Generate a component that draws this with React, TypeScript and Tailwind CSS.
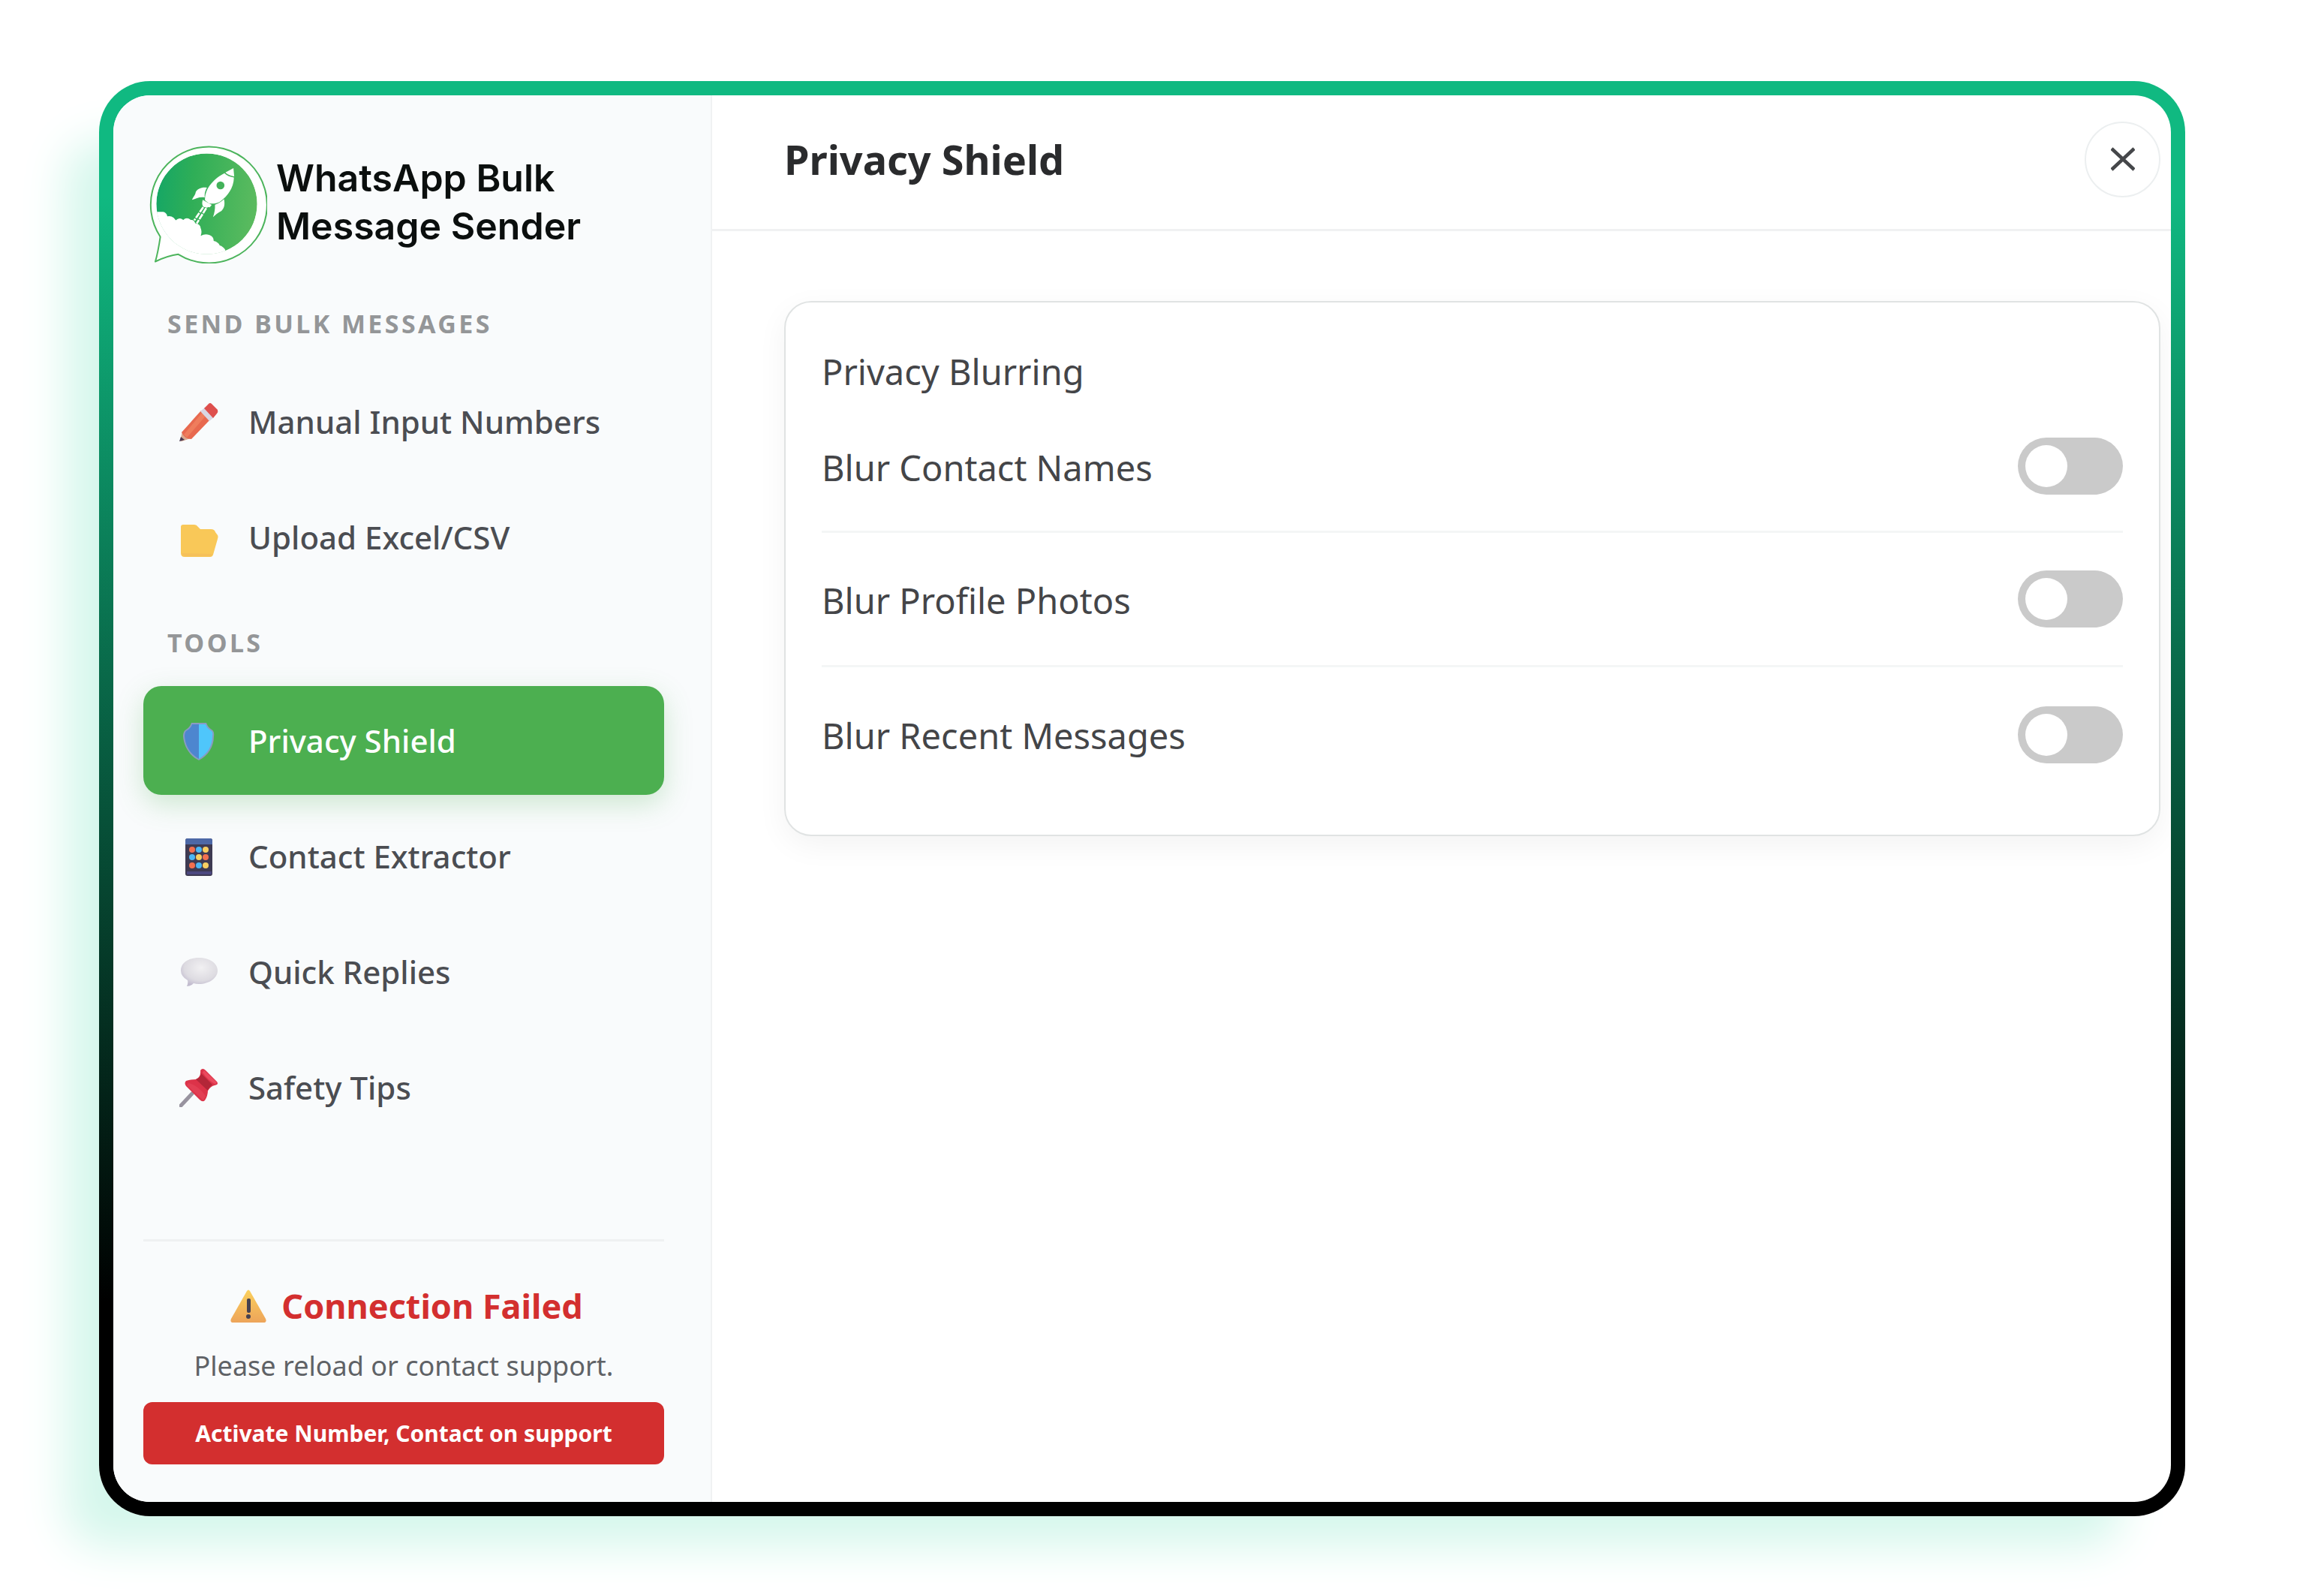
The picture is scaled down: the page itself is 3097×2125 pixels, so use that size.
import { useState } from "react";
import type { ReactNode } from "react";
import { clsx } from "clsx";

type NavItem = {
  id: string;
  label: string;
  icon: ReactNode;
};

type BlurSetting = {
  id: string;
  label: string;
};

function Logo() {
  return (
    <svg viewBox="54 64 484 480" className="h-40 w-[161px] shrink-0" aria-hidden="true">
      <defs>
        <linearGradient id="logo-green" x1="0" y1="0.4" x2="1" y2="0.5">
          <stop offset="0" stopColor="#16a765" />
          <stop offset="0.35" stopColor="#2fae57" />
          <stop offset="1" stopColor="#5cbb5f" />
        </linearGradient>
        <clipPath id="logo-disc">
          <circle cx="296" cy="306" r="202" />
        </clipPath>
      </defs>
      <path
        d="M110 438A233 233 0 1 1 182 508C150 512 118 524 90 537C99 506 105 472 110 438Z"
        fill="#fff"
        stroke="#4cb45c"
        strokeWidth="6"
        strokeLinejoin="round"
      />
      <g clipPath="url(#logo-disc)">
        <circle cx="296" cy="306" r="202" fill="url(#logo-green)" />
        <path
          d="M80 338H122Q136 342 138 356Q152 352 164 362L172 372Q186 358 202 370Q216 356 232 370Q246 368 250 384Q270 386 272 404Q278 416 272 434Q288 424 306 430Q324 436 324 454Q342 458 348 472Q362 476 370 490L380 540H60Z"
          fill="#fff"
        />
      </g>
      {/* rocket */}
      <g fill="#fff">
        <path d="M371 180L403 163L406 196C398 194 380 190 371 180Z" />
        <path d="M367 183C376 193 392 199 405 200C404 238 384 272 348 298C335 305 320 306 305 304L289 291C288 276 293 258 300 245C316 218 338 198 367 183Z" />
        <path d="M297 241C275 238 259 246 252 258C250 272 240 280 237 290C254 284 268 276 288 280C286 265 290 252 297 241Z" />
        <path d="M365 287C370 308 366 324 355 334C340 342 330 350 321 359C327 342 330 326 329 309C344 304 356 297 365 287Z" />
        <path d="M280 290L316 310L308 320C300 316 298 326 290 318C282 322 274 310 280 290Z" />
      </g>
      <circle cx="351" cy="232" r="16" fill="#43b25a" />
      <path d="M294 323L256 384M282 319L246 372" stroke="#fff" strokeWidth="8" strokeDasharray="24 4" />
    </svg>
  );
}

function PencilIcon() {
  return (
    <svg viewBox="0 0 52 52" className="size-13" aria-hidden="true">
      <path d="M1 51L4 39L15 48L3 52Z" fill="#d9a98f" />
      <path d="M0 52L2 46L7 50Z" fill="#4b3a52" />
      <path d="M3 40L29 11L43 21L16 49Q7 49 3 40Z" fill="#e8694f" />
      <path d="M6 43L31 13L36 17L10 47Z" fill="#ef7d5d" />
      <path d="M28 12L34 7L46 20L40 25Z" fill="#d9d6e2" />
      <path d="M33 8L39 2Q41 0 43 2L51 10Q52 13 50 15L45 21Z" fill="#de4f4d" />
    </svg>
  );
}

function FolderIcon() {
  return (
    <svg viewBox="0 0 52 52" className="size-13" aria-hidden="true">
      <path d="M2 12Q2 9 5 9H20Q23 9 25 12L28 15H42Q47 15 48 19L51 23Q52 25 51 28L45 49Q44 52 41 52H7Q2 52 2 47Z" fill="#f9c858" />
      <path d="M3 47Q4 51 9 51H41Q43 51 44 48Z" fill="#f5c05a" />
    </svg>
  );
}

function ShieldIcon() {
  return (
    <svg viewBox="0 0 52 52" className="size-13" aria-hidden="true">
      <path d="M16 2H36Q38 8 43 11Q47 13 46 20C46 34 38 46 26 52C14 46 6 34 5 20Q5 13 9 11Q14 8 16 2Z" fill="#8a9bc0" />
      <path d="M17 4H26V50C15 44 8 33 7 20Q7 15 9 13Q15 10 17 4Z" fill="#4d86cf" />
      <path d="M26 4H35Q37 10 43 13Q45 15 44 20C44 33 37 44 26 50Z" fill="#4fc6fb" />
    </svg>
  );
}

function PhoneIcon() {
  return (
    <svg viewBox="0 0 52 52" className="size-13" aria-hidden="true">
      <rect x="8" y="2" width="36" height="50" rx="3" fill="#3e3a52" />
      <path d="M8 5Q8 2 11 2H41Q44 2 44 5V10H8Z" fill="#4d68a6" />
      <rect x="10" y="46" width="33" height="4" fill="#4c4880" />
      <g fill="#f2704f">
        <circle cx="17" cy="17" r="4" />
        <circle cx="35" cy="27" r="4" />
        <circle cx="17" cy="38" r="4" />
      </g>
      <g fill="#4bb7f5">
        <circle cx="26" cy="17" r="4" />
        <circle cx="17" cy="27" r="4" />
        <circle cx="26" cy="38" r="4" />
      </g>
      <g fill="#f7cf62">
        <circle cx="35" cy="17" r="4" />
        <circle cx="26" cy="27" r="4" />
        <circle cx="35" cy="38" r="4" />
      </g>
    </svg>
  );
}

function BubbleIcon() {
  return (
    <svg viewBox="0 0 52 52" className="size-13" aria-hidden="true">
      <defs>
        <radialGradient id="bubble-grey" cx="0.55" cy="0.35" r="0.65">
          <stop offset="0" stopColor="#f1f0f2" />
          <stop offset="0.7" stopColor="#dddbe1" />
          <stop offset="1" stopColor="#c2bccf" />
        </radialGradient>
      </defs>
      <path d="M26 7C40 7 51 14 51 24S40 42 26 42Q22 42 19 41Q15 45 10 45Q12 41 11 37Q2 32 2 24C2 14 12 7 26 7Z" fill="url(#bubble-grey)" />
    </svg>
  );
}

function PinIcon() {
  return (
    <svg viewBox="0 0 52 52" className="size-13" aria-hidden="true">
      <path d="M17 34L2 50" stroke="#98939f" strokeWidth="5" strokeLinecap="round" />
      <path d="M28 3Q31 -1 35 3L50 18Q53 22 47 23Q42 24 38 30Q38 37 34 43Q31 46 27 42L9 24Q6 20 9 17Q14 15 22 15Q29 12 28 3Z" fill="#dc3349" />
      <path d="M22 15Q29 12 29 7L44 22Q40 25 38 30Z" fill="#b32638" />
      <path d="M33 3L49 18Q51 21 47 21Q38 16 31 6Z" fill="#ea4a5e" />
      <path d="M12 20Q24 22 35 37L32 43L10 23Z" fill="#e23f54" />
    </svg>
  );
}

function WarningIcon() {
  return (
    <svg viewBox="0 0 48 44" className="h-11 w-12 shrink-0" aria-hidden="true">
      <defs>
        <linearGradient id="warning-amber" x1="0" y1="0" x2="0" y2="1">
          <stop offset="0" stopColor="#fbd05c" />
          <stop offset="1" stopColor="#eda45a" />
        </linearGradient>
      </defs>
      <path d="M22 2Q24 -1 26 2L47 39Q49 44 44 44H4Q-1 44 1 39Z" fill="url(#warning-amber)" />
      <rect x="22" y="12" width="5" height="19" rx="2" fill="#46414f" />
      <circle cx="24" cy="36" r="3" fill="#46414f" />
    </svg>
  );
}

const sendItems: NavItem[] = [
  { id: "manual", label: "Manual Input Numbers", icon: <PencilIcon /> },
  { id: "upload", label: "Upload Excel/CSV", icon: <FolderIcon /> },
];

const toolItems: NavItem[] = [
  { id: "privacy", label: "Privacy Shield", icon: <ShieldIcon /> },
  { id: "extractor", label: "Contact Extractor", icon: <PhoneIcon /> },
  { id: "replies", label: "Quick Replies", icon: <BubbleIcon /> },
  { id: "safety", label: "Safety Tips", icon: <PinIcon /> },
];

const blurSettings: BlurSetting[] = [
  { id: "blur-names", label: "Blur Contact Names" },
  { id: "blur-photos", label: "Blur Profile Photos" },
  { id: "blur-messages", label: "Blur Recent Messages" },
];

type NavGroupProps = {
  title: string;
  items: NavItem[];
  activeId: string;
  onSelect: (id: string) => void;
};

function NavGroup({ title, items, activeId, onSelect }: NavGroupProps) {
  return (
    <div>
      <h2 className="pl-8 text-[34px] leading-12 font-bold tracking-widest text-[#949698]">{title}</h2>
      <ul className="mt-[34px] flex flex-col gap-[9px]">
        {items.map((item) => (
          <li key={item.id}>
            <button
              type="button"
              onClick={() => onSelect(item.id)}
              aria-current={item.id === activeId ? "page" : undefined}
              className={clsx(
                "flex h-[145px] w-full items-center gap-10 rounded-3xl px-12 text-left text-[42px] font-medium",
                item.id === activeId
                  ? "bg-[#4caf50] text-white shadow-[0_12px_36px_rgba(76,175,80,0.25)]"
                  : "text-[#4b4d52]",
              )}
            >
              {item.icon}
              {item.label}
            </button>
          </li>
        ))}
      </ul>
    </div>
  );
}

export default function App() {
  const [activeId, setActiveId] = useState("privacy");
  const [enabled, setEnabled] = useState<Record<string, boolean>>({});

  return (
    <div className="flex min-h-screen bg-white pt-[108px] pr-[185px] pb-[105px] pl-[132px] font-['Noto_Sans','Open_Sans',sans-serif]">
      <div className="flex flex-1 rounded-[68px] bg-linear-to-b/srgb from-[#10b981] from-8% to-black to-85% p-[19px] shadow-[-64px_60px_60px_-20px_#d5f7ec]">
        <div className="flex flex-1 overflow-hidden rounded-[49px] bg-white">
          {/* Sidebar */}
          <aside className="flex w-[798px] shrink-0 flex-col border-r-2 border-[#f0f2f3] bg-[#f9fbfc] pt-16 pr-[62px] pb-[50px] pl-10">
            <div className="flex items-center gap-3 pl-1">
              <Logo />
              <p className="pb-1 font-['Inter',sans-serif] text-[50px] leading-16 font-semibold whitespace-nowrap text-[#0b0f0e]">
                WhatsApp Bulk
                <br />
                Message Sender
              </p>
            </div>

            <nav className="mt-14 flex flex-col gap-11">
              <NavGroup title="SEND BULK MESSAGES" items={sendItems} activeId={activeId} onSelect={setActiveId} />
              <NavGroup title="TOOLS" items={toolItems} activeId={activeId} onSelect={setActiveId} />
            </nav>

            <div className="mt-auto border-t-3 border-[#eff1f2] pt-14 text-center">
              <p className="flex items-center justify-center gap-5 pl-2 text-[45px] leading-15 font-bold text-[#d32f2f]">
                <WarningIcon />
                Connection Failed
              </p>
              <p className="mt-6 text-[36px] leading-13 text-[#5f6266]">Please reload or contact support.</p>
              <button
                type="button"
                className="mt-[22px] h-[83px] w-full rounded-xl bg-[#d32f2f] text-[30px] font-bold whitespace-nowrap text-white"
              >
                Activate Number, Contact on support
              </button>
            </div>
          </aside>

          {/* Main panel */}
          <main className="flex-1">
            <header className="flex h-[181px] items-center justify-between border-b-3 border-[#f0f1f2] pr-3.5 pb-2 pl-24">
              <h1 className="text-[54px] font-bold text-[#2a2b2d]">Privacy Shield</h1>
              <button
                type="button"
                aria-label="Close"
                className="flex size-[101px] items-center justify-center rounded-full border-2 border-[#eceff0]"
              >
                <svg viewBox="0 0 32 32" className="size-8" aria-hidden="true">
                  <path d="M1 2L31 30M31 2L1 30" stroke="#45474a" strokeWidth="4.5" />
                </svg>
              </button>
            </header>

            <section className="mt-[93px] mr-3.5 ml-24 rounded-[36px] border-2 border-[#e0e3e3] px-12 pt-14 pb-11 text-[47px] text-[#444548] shadow-[0_12px_40px_rgba(0,0,0,0.05)]">
              <h2 className="leading-18">Privacy Blurring</h2>
              <ul>
                {blurSettings.map((setting) => (
                  <li
                    key={setting.id}
                    className="flex h-[179px] items-center justify-between border-b-3 border-[#f4f6f6] first:pt-1 last:border-b-0"
                  >
                    <label htmlFor={setting.id} className="pt-1">
                      {setting.label}
                    </label>
                    <input
                      id={setting.id}
                      type="checkbox"
                      role="switch"
                      checked={enabled[setting.id] ?? false}
                      onChange={(e) => setEnabled((prev) => ({ ...prev, [setting.id]: e.target.checked }))}
                      className="flex h-19 w-[140px] cursor-pointer appearance-none items-center rounded-full bg-[#cacaca] px-2.5 before:size-14 before:rounded-full before:bg-white before:content-[''] checked:justify-end checked:bg-[#4caf50]"
                    />
                  </li>
                ))}
              </ul>
            </section>
          </main>
        </div>
      </div>
    </div>
  );
}
